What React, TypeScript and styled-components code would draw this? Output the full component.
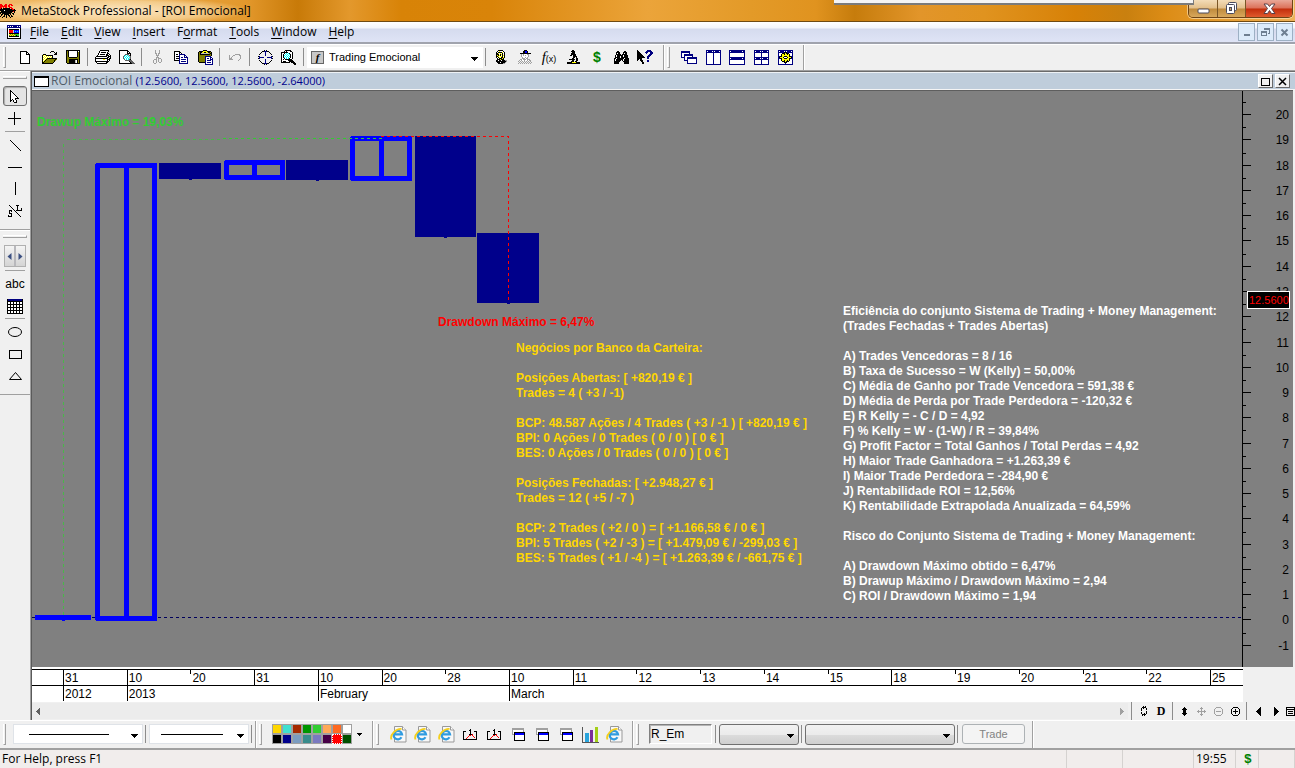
import React from "react";
import styled, { createGlobalStyle, css } from "styled-components";

const UI = `"Open Sans", "Noto Sans", sans-serif`;
const ARIAL = `"Liberation Sans", Arial, sans-serif`;

const Global = createGlobalStyle`
  *, *::before, *::after { box-sizing: border-box; }
  html, body, #root { height: 100%; }
  body { margin: 0; background: #f0f0f0; color: #000; font: 12px/16px ${UI}; overflow: hidden; }
  button, select, input { font: inherit; color: inherit; margin: 0; padding: 0; border-radius: 0; }
  button { background: none; border: 0; cursor: default; }
  svg { display: block; flex: none; }
`;

/* ---------- pixel sprites ---------- */

const PALETTE: Record<string, string> = {
  k: "#000", w: "#fff", y: "#ff0", Y: "#ffe600", o: "#808000", g: "#a0a0a0", d: "#606060",
  n: "#000080", b: "#00f", c: "#0ff", r: "#f00", m: "#c8c8c8", G: "#32cd32", s: "#c0c0c0",
};

const Sprite = ({ rows }: { rows: string[] }) => {
  const w = Math.max(...rows.map((r) => r.length));
  const rects: React.ReactNode[] = [];
  rows.forEach((row, y) => {
    let x = 0;
    while (x < row.length) {
      const ch = row[x];
      let n = 1;
      while (row[x + n] === ch) n++;
      if (PALETTE[ch]) rects.push(<rect key={`${x}-${y}`} x={x} y={y} width={n} height={1} fill={PALETTE[ch]} />);
      x += n;
    }
  });
  return (
    <svg width={w} height={rows.length} shapeRendering="crispEdges" aria-hidden="true">
      {rects}
    </svg>
  );
};

const S = {
  fresh: [
    "kkkkkkk...", "kwwwwwkk..", "kwwwwwkwk.", "kwwwwwkkkk", "kwwwwwwwwk", "kwwwwwwwwk", "kwwwwwwwwk",
    "kwwwwwwwwk", "kwwwwwwwwk", "kwwwwwwwwk", "kwwwwwwwwk", "kwwwwwwwwk", "kkkkkkkkkk",
  ],
  open: [
    ".........kkk...", "........k...k.k", ".............kk", ".kkk........kkk", "kywykkkkkkk....",
    "kwywywywywk....", "kywywywywyk....", "kwywykkkkkkkkkk", "kywykooooooooko", "kwykooooooooko.",
    "kykoooooooook..", "kkoooooooook...", "kkkkkkkkkkk....",
  ],
  save: [
    "kkkkkkkkkkkkkk", "kokwwwwwwwwkwk", "kokwwwwwwwwkok", "kokwwwwwwwwkok", "kokwwwwwwwwkok",
    "kokwwwwwwwwkok", "kokwwwwwwwwkok", "kookkkkkkkkook", "kooooooooooook", "kookkkkkkkkkok",
    "kookkkkkkswkok", "kookkkkkkswkok", "kookkkkkkswkok", ".kkkkkkkkkkkkk",
  ],
  print: [
    ".....kkkkkkkkk..", "....kwwwwwwwwk..", "....kwkkkkkwk...", "...kwwwwwwwwkk..", "...kwkkkkkwkkwk.",
    "..kwwwwwwwwkkkwk", ".kkkkkkkkkkkwkkk", "kwwwwwwwwwwwkkwk", "kkkkkkkkkkkkkwkk", "kwwwwwwwyywwkkk.",
    "kwwwwwwwwwwwkwk.", "kkkkkkkkkkkkkk..", ".kwwwwwwwwwkk...", "..kkkkkkkkkk....",
  ],
  preview: [
    "kkkkkkkkk.......", "kwwwwwwwkk......", "kwwwwwwwkwk.....", "kwwwwwwwkkkk....", "kwwwwwddddwk....",
    "kwwwwdcwcmdk....", "kwwwdcwcwcmd....", "kwwwdwcwcwcd....", "kwwwdcwcwcmd....", "kwwwwdwcwcdk....",
    "kwwwwwddddddd...", "kwwwwwwwwwkddd..", "kwwwwwwwwwwkddd.", "kkkkkkkkkkkkkddd",
  ],
  cut: [
    "..g...g..", "..g...g..", "..g...g..", "..gg.gg..", "...g.g...", "...ggg...", "....g....", "...ggg...",
    "...g.ggg.", ".ggg.g..g", "g..g.g..g", "g..g.g..g", "g..g..gg.", ".gg......",
  ],
  copy: [
    "kkkkkk.........", "kwwwwkk........", "kwwwwkwk.......", "kwkkwnnnnnn....", "kwwwwnwwwwnn...",
    "kwkkknwwwwnwn..", "kwwwwnwnnwnnnn.", "kwkkknwwwwwwwn.", "kwwwwnwnnnnnwn.", "kkkkknwwwwwwwn.",
    ".....nwnnnnnwn.", ".....nwwwwwwwn.", ".....nnnnnnnnn.",
  ],
  paste: [
    ".....kkkk......", ".kkkkyyyykkkk..", "kokkyykkyykkok.", "kokssssssssokk.", "kokkkkkkkkkkok.",
    "kooooooooooook.", "koooooonnnnnn..", "koooooonwwwwnn.", "koooooonwnnwnwn", "koooooonwwwwnnn",
    "koooooonwnnnnwn", "koooooonwwwwwwn", ".kkkkkknwnnnnwn", ".......nwwwwwwn", ".......nnnnnnnn",
  ],
  undo: [
    "......ggggg.", "g...gg....gg", "g..g.......g", "g.g........g", "ggg........g", "gggg......g.", ".........g..",
  ],
  target: [
    "......k.k......", "....kknnnkk....", "...k...n...k...", "..k....n....k..", ".k.....n.....k.",
    ".......n.......", "kn...........nk", ".nnnnn...nnnnn.", "kn...........nk", ".......n.......",
    ".k.....n.....k.", "..k....n....k..", "...k...n...k...", "....kknnnkk....", "......k.k......",
  ],
  zoom: [
    "....kkkkkk......", "...kwkwwwkk.....", "kkkkkkkwwwwk....", "kwwkwcwckwwk....", "kwkwcwcwckwk....",
    "kwkcwcwcwkwk....", "kwkwcwcwckwk....", "kwkcwcwcwkwk....", "kwwkwcwckwwk....", "kwkwkkkkkkk.....",
    "kwwwwwwkkkkk....", "kwkkkwwwkkkkk...", "kkkkkkkkk.kkkk..", "............kkk.", ".............kk.",
  ],
  lamp: [
    "...kkkkk....", "..kwywwwk...", ".kwkkkkywk..", ".kkywywkwk..", ".kkkwkykwk..", ".kykykwkyk..",
    ".kkywyykwk..", ".kwkywkkyk..", "..kwkkkyk...", "..kkkykkk...", ".kkwkkwkkkgg", ".kkkkkkkkkkg", "..kkkwkkkkg.", "...kkkkkgg..",
  ],
  man: [
    "......kkk......", ".....kkbbk.....", ".....kkbbk.....", "..kkkkkkkkkkk..", "...g.gwwwgg....", "...gwgwgwwg....",
    "...gwwwwwwg....", "....gwwgwg.....", "....gggwgg.....", "..ggwgggwggg...", ".gwgwwgwwgwgg..", "g.g.g.g.g.g.g..",
    ".g.g.g.g.g.g.g.", "g.g.g.g.g.g.g..",
  ],
  scope: [
    ".....kk......", "....kkkk.....", ".....kkk.....", "....kkkk.....", "....kkkkk....", "...kk.kkk....",
    "......kkkk...", "......kk.k...", ".....kk..kk..", "..kkkkkk.kk..", ".....kk..kk..", "....kkk.kk...", "kkkkkyyyykkkk",
    "kkkkkkkkkkkkk",
  ],
  binoc: [
    "...kk.....kk...", "..kkkk...kkkk..", "..kwkk...kwkk..", "..kkkkk.kkkkk..", ".kwkkkkkkwkkkk.", ".kwkkkwkkwkkkk.",
    ".kkkkkwkkkkkkk.", "kkwkkkkkkkwkkkk", "kwkkkkkkkwkkkkk", "kwkkkkk.kwkkkkk", "kkkkkk...kkkkkk", "kkkkk.....kkkkk",
    "kkkkk.....kkkkk",
  ],
  help: [
    "k.........nnnn..", "kk.......nnnnnn.", "kkk.....nnn..nnn", "kkkk.....n...nnn", "kkkkk.......nnn.", "kkkkkk.....nnn..",
    "kkkkkkk...nnn...", "kkkkkkkk..nn....", "kkkkk.....nn....", "kk.kk...........", "k..kkk....nn....", "....kk....nn....",
    ".....kk.........", ".....kk.........",
  ],
  cascade: [
    "nnnnnnnnn.......", "nnnnnnnnn.......", "nwwwwwwwn.......", "nwwnnnnnnnnn....", "nwwnnnnnnnnn....", "nwwnwwwwwwwn....",
    "nnnnwwnnnnnnnnnn", "...nwwnnnnnnnnnn", "...nwwnwwwwwwwwn", "...nnnnwwwwwwwwn", "......nwwwwwwwwn", "......nwwwwwwwwn",
    "......nnnnnnnnnn",
  ],
  tileV: [
    "nnnnnnnnnnnnnnn", "nwnnnnwnwnnnnwn", "nnnnnnnnnnnnnnn", ...Array(11).fill("nwwwwwwnwwwwwwn"), "nnnnnnnnnnnnnnn",
  ],
  tileH: [
    "nnnnnnnnnnnnnnnn", "nwnnnnnnnnnnnwnn", "nnnnnnnnnnnnnnnn", ...Array(4).fill("nwwwwwwwwwwwwwwn"),
    "nnnnnnnnnnnnnnnn", "nwnnnnnnnnnnnwnn", "nnnnnnnnnnnnnnnn", ...Array(4).fill("nwwwwwwwwwwwwwwn"), "nnnnnnnnnnnnnnnn",
  ],
  tileQ: [
    "nnnnnnnnnnnnnnn", "nwnnnnwnwnnnnwn", "nnnnnnnnnnnnnnn", ...Array(4).fill("nwwwwwwnwwwwwwn"),
    "nnnnnnnnnnnnnnn", "nwnnnnwnwnnnnwn", "nnnnnnnnnnnnnnn", ...Array(4).fill("nwwwwwwnwwwwwwn"), "nnnnnnnnnnnnnnn",
  ],
  tileGear: [
    "nnnnnnnnnnnnnnn", "nwnnnnwnwnnnnwn", "nnnnnnkkknnnnnn", "nwwwkkkykkkwwwn", "nwwkyykyykykwwn", "nwwkyyyyyyykwwn",
    "nnkkyykkkyykknn", "nkyyykwwwkyyykn", "nnkkyykkkyykknn", "nwwkyyyyyyykwwn", "nwwkyykyykykwwn", "nwwwkkkykkkwwwn",
    "nwwwwwkkkwwwwwn", "nwwwwwwnwwwwwwn", "nnnnnnnnnnnnnnn",
  ],
  doc: [
    "nnnnnnnnnnnnnn", "nwnwnwnnnnwnwn", "nnnnnnnnnnnnnn", "kwwwwwwwwwwwwk", "kwkkkkkkkkkkwk", "kwrrrrmbbbbbwk",
    "kwrrrrmbcbcbwk", "kwrrrrmbbbbbwk", "kwkkkkkkkkkkwk", "kwyoyoyoGGGGwk", "kwoyoyoyGkGGwk", "kwkkkkkkkkkkwk",
    "kwwwwwwwwwwwwk", "kkkkkkkkkkkkkk",
  ],
  bug: [
    "rr...rr..rrr....", "rrr.rrr.rr.rr...", "rrrrrrr.rr......", "rr.r.rr..rrr....", "rk.kkkkkkk.rr...", "kkkkkkkkkkkkrrk.",
    "kkkkwkkkkkkkkkkk", ".kkkkkkkkkkkkrk.", "kkkkkkkkkkkk..k.", "k.kkkkkkkkk.kk..", ".kk.kkkkk.k..k..", ".k..k.k.kk.k....",
    "k..kk.k..k.kk...", "..k...k...k.....",
  ],
  pointer: [
    "k.........", "kk........", "kwk.......", "kwwk......", "kwwwk.....", "kwwwwk....", "kwwwwwk...", "kwwwwwwk..",
    "kwwwwkkkk.", "kwkwwk....", "kk.kwwk...", "k..kwwk...", "....kkk...",
  ],
  chartIn: [
    ".......k......", "......kk......", "kkk....k...kkk", "k......k.....k", "k......k.....k", "k.....kkkr...k",
    "k.....rr.r...k", "k....r....r..k", "k...r......r.k", "k..r.........k", "kkkkkkkkkkkkkk",
  ],
  windows: [
    "gggggggggggg.", "gggggggggggg.", "gwwwwwwwwwwg.", "gwwwwwwwwwwg.", "gwkkkkkkkkkkk", "gwkbbbbbbbbbk", "ggkbbbbbbbbbk",
    "..kwwwwwwwwwk", "..kwwwwwwwwwk", "..kwwwwwwwwwk", "..kwwwwwwwwwk", "..kwwwwwwwwwk", "..kkkkkkkkkkk",
  ],
  table: [
    "knnnnnnnnnnnnnnk", "knnnnnnnnnnnnnnk", "kkkkkkkkkkkkkkkk", "kwwkwwkwwkwwkwwk", "kwwkwwkwwkwwkwwk", "kkkkkkkkkkkkkkkk",
    "kwwkwwkwwkwwkwwk", "kwwkwwkwwkwwkwwk", "kkkkkkkkkkkkkkkk", "kwwkwwkwwkwwkwwk", "kwwkwwkwwkwwkwwk", "kkkkkkkkkkkkkkkk",
    "kwwkwwkwwkwwkwwk", "kwwkwwkwwkwwkwwk", "kkkkkkkkkkkkkkkk",
  ],
  cycle: [
    "..k.k.", ".kkkk.", "k.k..k", "k....k", "k.....", ".....k", "k....k", "k..k.k", ".kkkk.", ".k.k..",
  ],
  vert: ["...k...", "..kkk..", ".kkkkk.", "..kkk..", "..kkk..", "..kkk..", ".kkkkk.", "..kkk..", "...k..."],
  move: ["....g....", "...ggg...", "....g....", ".g..g..g.", "ggggggggg", ".g..g..g.", "....g....", "...ggg...", "....g...."],
  minus: ["..ggggg..", ".g.....g.", "g.......g", "g.......g", "g.ggggg.g", "g.......g", "g.......g", ".g.....g.", "..ggggg.."],
  plus: ["..kkkkk..", ".k.....k.", "k...k...k", "k...k...k", "k.kkkkk.k", "k...k...k", "k...k...k", ".k.....k.", "..kkkkk.."],
  left: ["....k", "...kk", "..kkk", ".kkkk", "kkkkk", ".kkkk", "..kkk", "...kk", "....k"],
  right: ["k....", "kk...", "kkk..", "kkkk.", "kkkkk", "kkkk.", "kkk..", "kk...", "k...."],
  list: ["kkkkkkkkk", "k.......k", "kkkkkkkkk", "k.......k", "k.kkkkk.k", "k.......k", "k.kkkkk.k", "k.......k", "kkkkkkkkk"],
  down: ["kkkkkkk", ".kkkkk.", "..kkk..", "...k..."],
  downSm: ["kkkkk", ".kkk.", "..k.."],
  leftSm: ["...d", "..dd", ".ddd", "dddd", ".ddd", "..dd", "...d"],
  rightSm: ["g...", "gg..", "ggg.", "gggg", "ggg.", "gg..", "g..."],
};

const IeIcon = () => (
  <svg width="17" height="17" viewBox="0 0 17 17" aria-hidden="true">
    <path d="M4.500 .5h8l3.500 3.500v12h-11.500z" fill="#f8f8f8" stroke="#999" />
    <path d="M12.500 .5v3.500h3.500" fill="#fff" stroke="#999" />
    <path d="M11.500 11.300a4.200 4.200 0 1 1 .5-3H4.500" fill="none" stroke="#2f9be0" strokeWidth="2.200" />
    <path d="M1.500 13.500C-.5 9 6 2.500 11.500 3" fill="none" stroke="#f4cf1d" strokeWidth="1.800" />
  </svg>
);

const BarsIcon = () => (
  <svg width="17" height="17" viewBox="0 0 17 17" shapeRendering="crispEdges" aria-hidden="true">
    <path d="M.5 1v15.500H17" fill="none" stroke="#555" />
    <path d="M3 7h4v9H3z" fill="#2aa5dc" />
    <path d="M8 4h3v12H8z" fill="#7b2d9b" />
    <path d="M13 1h3v15h-3z" fill="#a4cf18" />
  </svg>
);

/* ---------- window frame ---------- */

const Window = styled.div`
  display: flex;
  flex-direction: column;
  min-height: 100vh;
  background: #f0f0f0;
`;

const TitleBar = styled.header`
  position: relative;
  display: flex;
  align-items: center;
  gap: 5px;
  height: 22px;
  border-bottom: 1px solid #6f4a12;
  background:
    radial-gradient(ellipse 160px 18px at 120px 11px, rgba(255, 243, 220, .85), rgba(255, 240, 205, .5) 55%, transparent 80%),
    linear-gradient(90deg, #f0ba68 0, #e3982c 19%, #c87a08 23%, #e3982c 27%, #d88307 31%, #d98409 38%, #eba43a 50%, #e39a28 58%, #e0931f 63%, #c67c0c 66%, #e2952a 71%, #e0931f 76%, #d78107 83%, #c9800f 87%, #dc8c16 90%, #e9a33a 96%, #eeb35a 100%);
`;

const Title = styled.h1`
  flex: 1;
  margin: 0;
  font: 12px/20px ${UI};
`;

const TopSheet = styled.div`
  position: absolute;
  top: 0;
  right: 101px;
  width: 360px;
  height: 5px;
  background: #f4f4f4;
  border-bottom: 2px solid #7b7b7b;
  border-right: 1px solid #7b7b7b;
`;

const CaptionButtons = styled.div`
  display: flex;
  align-self: flex-start;
  height: 18px;
  margin-right: 2px;
  border: 1px solid #6d4416;
  border-top: 0;
  border-radius: 0 0 5px 5px;
  overflow: hidden;
  box-shadow: 0 0 0 1px rgba(255, 235, 200, .6);
`;

const CaptionButton = styled.button<{ $close?: boolean }>`
  display: grid;
  place-items: center;
  width: ${(p) => (p.$close ? 47 : 28)}px;
  background: ${(p) =>
    p.$close
      ? "linear-gradient(#e9a898 0, #dc7058 48%, #c22d0c 52%, #e05a2c 100%)"
      : "linear-gradient(#f3dcb8 0, #e2bf8a 48%, #bf8a3c 52%, #d8a85c 100%)"};
  & + & { border-left: 1px solid #7a5626; }
`;

const MenuBar = styled.nav`
  display: flex;
  align-items: center;
  height: 22px;
  padding: 0 2px 0 7px;
  background: linear-gradient(#fff 0, #f3f5fb 6px, #d5dbee 7px, #dfe4f6 100%);
  border-bottom: 2px solid #a0a3ad;
`;

const MenuItem = styled.button`
  padding: 0 6px;
  font: 12px/18px ${UI};
  u { text-underline-offset: 2px; }
`;

const MenuGap = styled.div`
  width: 3px;
`;

const Spacer = styled.div`
  flex: 1;
`;

const ChildButtons = styled.div`
  display: flex;
  gap: 2px;
`;

const ChildButton = styled.button`
  display: grid;
  place-items: center;
  width: 17px;
  height: 18px;
  background: #dcebfa;
  border: 1px solid #9db0c4;
`;

/* ---------- tool bars ---------- */

const Toolbar = styled.div<{ $bottom?: boolean }>`
  display: flex;
  align-items: center;
  height: ${(p) => (p.$bottom ? 29 : 27)}px;
  border-top: 1px solid #fff;
  border-bottom: 1px solid #a0a0a0;
`;

const ToolGroup = styled.div<{ $roomy?: boolean }>`
  display: flex;
  align-items: center;
  align-self: stretch;
  padding: 0 ${(p) => (p.$roomy ? 6 : 0)}px 1px 0;
  border-right: 1px solid #a0a0a0;
  box-shadow: 1px 0 0 #fff;
`;

const Grip = styled.i<{ $flat?: boolean }>`
  flex: none;
  ${(p) =>
    p.$flat
      ? css`width: 24px; height: 3px; margin: 4px 0 7px; border-bottom: 1px solid #a0a0a0; border-right: 1px solid #a0a0a0; border-top: 1px solid #fff;`
      : css`width: 3px; height: 21px; margin: 0 7px 0 3px; border-right: 1px solid #a0a0a0; border-bottom: 1px solid #a0a0a0; border-left: 1px solid #fff;`}
`;

const Sep = styled.i<{ $flat?: boolean }>`
  flex: none;
  ${(p) =>
    p.$flat
      ? css`width: 20px; height: 1px; margin: 1px 0 2px; background: #a0a0a0;`
      : css`width: 1px; height: 18px; margin: 0 3px 0 2px; background: #8c8c8c;`}
`;

const Tool = styled.button<{ $pressed?: boolean; $w?: number }>`
  display: grid;
  place-items: center;
  flex: none;
  width: ${(p) => p.$w ?? 24}px;
  height: 22px;
  ${(p) =>
    p.$pressed &&
    css`
      height: 20px;
      margin: 0 0 2px;
      background: #e4e4e4;
      border: 1px solid #707070;
      border-radius: 3px;
      box-shadow: inset 1px 1px 1px #aaa;
    `}
`;

const Glyph = styled.span<{ $size?: number; $color?: string; $serif?: boolean; $bold?: boolean }>`
  font: ${(p) => (p.$bold ? "bold " : "")}${(p) => p.$size ?? 12}px/16px ${(p) => (p.$serif ? `"Liberation Serif", serif` : ARIAL)};
  color: ${(p) => p.$color ?? "#000"};
`;

const Fx = styled.span`
  font: italic 15px/16px "Liberation Serif", serif;
  small { font: 9px/9px ${ARIAL}; }
`;

const Combo = styled.label<{ $w: number; $h: number; $look: "white" | "field" | "button" }>`
  position: relative;
  flex: none;
  width: ${(p) => p.$w}px;
  height: ${(p) => p.$h}px;
  select {
    appearance: none;
    width: 100%;
    height: 100%;
    padding: 0 18px 0 ${(p) => (p.$look === "white" ? 21 : 6)}px;
    font: 11px/16px ${ARIAL};
    outline: 0;
    ${(p) =>
      p.$look === "button"
        ? css`border: 1px solid #707070; border-radius: 3px; background: linear-gradient(#f2f2f2 0, #ebebeb 50%, #dcdcdc 51%, #cfcfcf 100%);`
        : css`border: 1px solid ${p.$look === "field" ? "#dfe3e8" : "#fff"}; background: #fff;`}
  }
`;

const ComboArrow = styled.span`
  position: absolute;
  right: 5px;
  top: 50%;
  pointer-events: none;
`;

const ComboLead = styled.span`
  position: absolute;
  left: 4px;
  top: 4px;
  width: 13px;
  height: 13px;
  background: #c8c8c8;
  border: 1px solid #666;
  font: italic bold 11px/10px "Liberation Serif", serif;
  text-align: center;
  pointer-events: none;
`;

const LineSample = styled.span`
  position: absolute;
  left: 12%;
  right: 26%;
  top: 50%;
  height: 1px;
  background: #000;
  pointer-events: none;
`;

const Swatches = styled.div`
  display: grid;
  grid-template-columns: repeat(8, 10px);
  grid-auto-rows: 10px;
  margin-left: 3px;
`;

const Swatch = styled.button<{ $c: string; $on?: boolean }>`
  background: ${(p) => p.$c};
  border: 1px ${(p) => (p.$on ? "dotted #fff" : "solid #a0a0a0")};
`;

const SymbolBox = styled.input`
  width: 63px;
  height: 20px;
  margin: 0 1px 0 3px;
  padding: 0 1px;
  background: #f0f0f0;
  border: 1px solid;
  border-color: #808080 #fff #fff #808080;
  box-shadow: inset 1px 1px 0 #b4b4b4;
  font: 12px/16px ${ARIAL};
`;

const TradeButton = styled.button`
  width: 63px;
  height: 20px;
  margin: 0 7px 0 1px;
  background: #f4f4f4;
  border: 1px solid #adb2b5;
  border-radius: 3px;
  font: 11px/16px ${ARIAL};
  &:disabled { color: #838383; }
`;

/* ---------- work area ---------- */

const Body = styled.div`
  display: flex;
  flex: 1;
`;

const SideBar = styled.aside`
  display: flex;
  flex-direction: column;
  flex: none;
  width: 31px;
  border-right: 1px solid #a0a0a0;
`;

const SideGroup = styled.div`
  display: flex;
  flex-direction: column;
  align-items: center;
  padding-bottom: 7px;
  border-bottom: 1px solid #a0a0a0;
  border-top: 1px solid #fff;
`;

const Spinner = styled.div`
  display: flex;
  width: 22px;
  height: 22px;
  margin-bottom: 2px;
  border: 1px solid #b0b0b0;
  button { flex: 1; display: grid; place-items: center; background: linear-gradient(#f4f4f4, #d4d4d4); }
  button + button { border-left: 2px solid #b8b8bc; }
`;

const ChartWindow = styled.main`
  display: flex;
  flex-direction: column;
  flex: 1;
  min-width: 0;
  border-left: 1px solid #5a5a5a;
  border-top: 1px solid #6b6b6b;
`;

const ChartTitle = styled.div`
  display: flex;
  align-items: center;
  gap: 2px;
  height: 18px;
  padding: 0 5px 0 2px;
  background: #bfcddb;
  border-top: 1px solid #eef2f5;
  border-bottom: 1px solid #f4f4f4;
  color: #505b66;
  b { font-weight: 400; font-size: 11px; color: #00008b; }
`;

const MiniWindow = styled.i`
  width: 15px;
  height: 11px;
  background: #fff;
  border: 1px solid #000;
  border-top-width: 2px;
`;

const MiniButton = styled.button`
  display: grid;
  place-items: center;
  width: 15px;
  height: 14px;
  background: #f0f0f0;
  border: 1px solid;
  border-color: #fff #696969 #696969 #fff;
`;

const PlotRow = styled.div`
  display: flex;
  flex: 1;
  margin-right: 2px;
  border-top: 1px solid #5e5e5e;
  background: #808080;
`;

const Plot = styled.div`
  position: relative;
  flex: 1;
  overflow: hidden;
`;

const Note = styled.p<{ $x: number; $y: number; $color: string }>`
  position: absolute;
  left: ${(p) => p.$x}px;
  top: ${(p) => p.$y}px;
  margin: 0;
  color: ${(p) => p.$color};
  font: bold 12px/15px ${ARIAL};
  white-space: pre;
`;

const PriceAxis = styled.div`
  position: relative;
  display: flex;
  flex-direction: column;
  width: 51px;
  padding: 11px 0 9px;
  border-left: 1px solid #000;
`;

const Price = styled.div`
  display: flex;
  flex: 1;
  align-items: center;
  justify-content: flex-end;
  padding: 1px 4px 0 0;
  background:
    linear-gradient(#000, #000) 0 0 / 3px 1px no-repeat,
    linear-gradient(#000, #000) 0 50% / 8px 1px no-repeat;
  font: 12px/14px ${ARIAL};
`;

const LastPrice = styled.span`
  position: absolute;
  left: 4px;
  top: 200px;
  width: 43px;
  padding: 0 1px;
  background: #000;
  border: 1px solid #fff;
  color: #f00;
  font: 11px/16px ${ARIAL};
`;

const DateAxis = styled.div`
  margin-right: 52px;
  padding: 2px 0 1px;
  background: #fff;
  font: 12px/16px ${ARIAL};
`;

const DateRow = styled.div`
  display: flex;
  height: 16px;
  border-top: 1px solid #000;
`;

const DateCell = styled.span<{ $span?: number; $w?: number; $tick?: "full" | "short" }>`
  flex: ${(p) => (p.$w ? `0 0 ${p.$w}px` : `${p.$span ?? 1} 1 0`)};
  min-width: 0;
  text-indent: 2px;
  white-space: nowrap;
  background: ${(p) =>
    p.$tick ? `linear-gradient(#000, #000) 0 0 / 1px ${p.$tick === "full" ? "100%" : "4px"} no-repeat` : "none"};
`;

const ScrollRow = styled.div`
  display: flex;
  align-items: center;
  height: 18px;
  overflow: hidden;
`;

const ScrollTrack = styled.div`
  display: flex;
  align-items: center;
  justify-content: space-between;
  flex: 1;
  height: 16px;
  margin-right: 1px;
  padding: 0 4px;
  background: #ececec;
`;

const StatusBar = styled.footer`
  display: flex;
  height: 19px;
  border-top: 1px solid #a0a0a0;
  background: #f1edec;
  line-height: 18px;
`;

const StatusCell = styled.span<{ $w?: number }>`
  flex: ${(p) => (p.$w ? `0 0 ${p.$w}px` : "1")};
  padding-left: 2px;
  border-right: 1px solid #d5d2d0;
  white-space: nowrap;
`;

/* ---------- data ---------- */

const MENUS = ["_File", "_Edit", "_View", "_Insert", "F_ormat", "_Tools", "_Window", "_Help"];

const DATES: [string, "full" | "short"][] = [
  ["31", "full"], ["10", "full"], ["20", "short"], ["31", "full"], ["10", "full"], ["20", "full"], ["28", "short"],
  ["10", "full"], ["11", "full"], ["12", "short"], ["13", "short"], ["14", "short"], ["15", "short"], ["18", "full"],
  ["19", "short"], ["20", "short"], ["21", "short"], ["22", "short"],
];

const PRICES = Array.from({ length: 22 }, (_, i) => 20 - i);

const COLORS = [
  "#ffd700", "#40e0d0", "#a52a00", "#009600", "#32cd32", "#ffa958", "#ff6a22", "#ffffff",
  "#000000", "#00008b", "#7b9cc0", "#388c8c", "#7a7ac0", "#460046", "#ff0000", "#005000",
];

const BANKS = `Negócios por Banco da Carteira:

Posições Abertas: [ +820,19 € ]
Trades = 4 ( +3 / -1)

BCP: 48.587 Ações / 4 Trades ( +3 / -1 ) [ +820,19 € ]
BPI: 0 Ações / 0 Trades ( 0 / 0 ) [ 0 € ]
BES: 0 Ações / 0 Trades ( 0 / 0 ) [ 0 € ]

Posições Fechadas: [ +2.948,27 € ]
Trades = 12 ( +5 / -7 )

BCP: 2 Trades ( +2 / 0 ) = [ +1.166,58 € / 0 € ]
BPI: 5 Trades ( +2 / -3 ) = [ +1.479,09 € / -299,03 € ]
BES: 5 Trades ( +1 / -4 ) = [ +1.263,39 € / -661,75 € ]`;

const SYSTEM = `Eficiência do conjunto Sistema de Trading + Money Management:
(Trades Fechadas + Trades Abertas)

A) Trades Vencedoras = 8 / 16
B) Taxa de Sucesso = W (Kelly) = 50,00%
C) Média de Ganho por Trade Vencedora = 591,38 €
D) Média de Perda por Trade Perdedora = -120,32 €
E) R Kelly = - C / D = 4,92
F) % Kelly = W - (1-W) / R = 39,84%
G) Profit Factor = Total Ganhos / Total Perdas = 4,92
H) Maior Trade Ganhadora = +1.263,39 €
I) Maior Trade Perdedora = -284,90 €
J) Rentabilidade ROI = 12,56%
K) Rentabilidade Extrapolada Anualizada = 64,59%

Risco do Conjunto Sistema de Trading + Money Management:

A) Drawdown Máximo obtido = 6,47%
B) Drawup Máximo / Drawdown Máximo = 2,94
C) ROI / Drawdown Máximo = 1,94`;

/* Solid candles are losing periods, hollow ones winning: [x, y, width, height] */
const SOLID = [[127, 72, 62, 16], [254, 69, 62, 20], [383, 45, 61, 101], [445, 142, 62, 70]];
const HOLLOW = [[63, 72, 62, 458], [192, 69, 61, 20], [318, 45, 62, 45]];

const Candles = () => (
  <svg width="100%" height="575" shapeRendering="crispEdges" role="img" aria-label="ROI Emocional">
    <line x1="0" x2="100%" y1="526.500" y2="526.500" stroke="#00005c" strokeDasharray="3 3" />
    <path d="M31.500 53V525M35 48.500H189" fill="none" stroke="#32cd32" strokeDasharray="3 3" strokeOpacity=".7" />
    <path d="M3 524h56v5H33v1h-3v-1H3z" fill="#00f" />
    {SOLID.map(([x, y, w, h]) => (
      <path key={x} d={`M${x} ${y}h${w}v${h}h-${w}zM${x + Math.floor(w / 2) - 1} ${y + h}h3v1h-3z`} fill="#00008b" />
    ))}
    {HOLLOW.map(([x, y, w, h]) => (
      <g key={x} fill="#00f">
        <path
          fillRule="evenodd"
          d={`M${x + 1} ${y}h${w - 2}l1 1v${h - 2}l-1 1h-${w - 2}l-1 -1v-${h - 2}zM${x + 5} ${y + 5}v${h - 10}h${w - 10}v-${h - 10}z`}
        />
        <rect x={x + Math.floor(w / 2) - 2} y={y} width="5" height={h} />
      </g>
    ))}
    <path d="M191 47.500H350" stroke="#32cd32" strokeDasharray="3 3" />
    <path d="M349 45.500H476.500V212" fill="none" stroke="#f00" strokeDasharray="3 3" />
  </svg>
);

const DropDown = ({ w, h, look, label, value, line, lead }: {
  w: number; h: number; look: "white" | "field" | "button"; label: string; value?: string; line?: boolean; lead?: boolean;
}) => (
  <Combo $w={w} $h={h} $look={look}>
    <select aria-label={label}><option>{value ?? ""}</option></select>
    {lead && <ComboLead aria-hidden="true">f</ComboLead>}
    {line && <LineSample />}
    <ComboArrow><Sprite rows={S.down} /></ComboArrow>
  </Combo>
);

const T = ({ label, s, w }: { label: string; s: keyof typeof S; w?: number }) => (
  <Tool aria-label={label} $w={w}><Sprite rows={S[s]} /></Tool>
);

const Stroke = ({ label, children }: { label: string; children: React.ReactNode }) => (
  <Tool aria-label={label}>
    <svg width="16" height="16" fill="none" stroke="#000" shapeRendering="crispEdges" aria-hidden="true">{children}</svg>
  </Tool>
);

export default function App() {
  return (
    <Window>
      <Global />
      <TitleBar>
        <Sprite rows={S.bug} />
        <Title>MetaStock Professional - [ROI Emocional]</Title>
        <TopSheet />
        <CaptionButtons>
          <CaptionButton aria-label="Minimize">
            <svg width="13" height="12"><rect x="1" y="6" width="11" height="4" rx="1" fill="#fff" stroke="#4a4a5c" /></svg>
          </CaptionButton>
          <CaptionButton aria-label="Restore">
            <svg width="13" height="13" fill="#fff" stroke="#4a4a5c">
              <rect x="3.500" y=".5" width="8" height="8" rx="1" /><rect x="1.500" y="2.500" width="8" height="9" rx="1" />
              <rect x="4.500" y="5.500" width="2" height="3" fill="#c9a065" />
            </svg>
          </CaptionButton>
          <CaptionButton $close aria-label="Close">
            <svg width="13" height="12">
              <path d="M1 1h3.500l2 2.500 2-2.500H12L8.500 5.500 12 10.500H8.500l-2-3-2 3H1l3.500-5z" fill="#fff" stroke="#5a4048" />
            </svg>
          </CaptionButton>
        </CaptionButtons>
      </TitleBar>

      <MenuBar>
        <Sprite rows={S.doc} />
        <MenuGap />
        {MENUS.map((m) => {
          const i = m.indexOf("_");
          return <MenuItem key={m}>{m.slice(0, i)}<u>{m[i + 1]}</u>{m.slice(i + 2)}</MenuItem>;
        })}
        <Spacer />
        <ChildButtons>
          <ChildButton aria-label="Minimize chart"><svg width="9" height="9"><path d="M2 6h6v2H2z" fill="#6e7f91" /></svg></ChildButton>
          <ChildButton aria-label="Restore chart">
            <svg width="9" height="9" fill="none" stroke="#6e7f91" shapeRendering="crispEdges">
              <path d="M3 2V.5h5.500V5H7" strokeWidth="1" /><path d="M3 1.500h5" /><path d="M.5 3.500h5v4h-5zM1 4.500h4" />
            </svg>
          </ChildButton>
          <ChildButton aria-label="Close chart"><svg width="9" height="9"><path d="M1.500 1.500l6 6M7.500 1.500l-6 6" stroke="#6e7f91" strokeWidth="2" /></svg></ChildButton>
        </ChildButtons>
      </MenuBar>

      <Toolbar>
        <ToolGroup $roomy>
          <Grip />
          <T label="New" s="fresh" /><T label="Open" s="open" /><T label="Save" s="save" /><Sep />
          <T label="Print" s="print" /><T label="Print preview" s="preview" /><Sep />
          <T label="Cut" s="cut" /><T label="Copy" s="copy" /><T label="Paste" s="paste" /><Sep />
          <T label="Undo" s="undo" /><Sep />
          <T label="Choose indicator" s="target" /><T label="Zoom box" s="zoom" /><Sep />
          <DropDown w={176} h={21} look="white" label="Indicator" value="Trading Emocional" lead /><Sep />
          <T label="Explorer" s="lamp" /><T label="Expert advisor" s="man" />
          <Tool aria-label="Indicator builder"><Fx>f<small>(x)</small></Fx></Tool>
          <T label="System tester" s="scope" />
          <Tool aria-label="Option scope"><Glyph $bold $size={14} $color="#008000">$</Glyph></Tool>
          <T label="Find" s="binoc" /><T label="Help pointer" s="help" />
        </ToolGroup>
        <ToolGroup $roomy>
          <Grip />
          <T label="Cascade" s="cascade" /><T label="Tile columns" s="tileV" /><T label="Tile rows" s="tileH" />
          <T label="Tile" s="tileQ" /><T label="Tile options" s="tileGear" />
        </ToolGroup>
      </Toolbar>

      <Body>
        <SideBar>
          <SideGroup>
            <Grip $flat />
            <Tool $pressed aria-label="Select"><Sprite rows={S.pointer} /></Tool>
            <Stroke label="Crosshair"><path d="M1 7.500H14M7.500 1V14" /></Stroke>
            <Sep $flat />
            <Stroke label="Trend line"><path d="M3 3L14 14" shapeRendering="auto" /></Stroke>
            <Stroke label="Horizontal line"><path d="M1 8.500H15" /></Stroke>
            <Stroke label="Vertical line"><path d="M8.500 1V14" /></Stroke>
            <Stroke label="Speed resistance lines">
              <path d="M2 2L14 14" shapeRendering="auto" />
              <path d="M10.500 2V7.500M9 2.500h3M9 7.500h5V5M5 7.500H2.500V10H4.500V13.500H1.500M4.500 7v2M1.500 12v2" />
            </Stroke>
          </SideGroup>
          <SideGroup>
            <Grip $flat />
            <Spinner>
              <button aria-label="Previous"><svg width="5" height="7"><path d="M4.500 0v7L.5 3.500z" fill="#3b4f81" /></svg></button>
              <button aria-label="Next"><svg width="5" height="7"><path d="M.5 0v7l4-3.500z" fill="#3b4f81" /></svg></button>
            </Spinner>
            <Sep $flat />
            <Tool aria-label="Text"><Glyph>abc</Glyph></Tool>
            <T label="Table" s="table" />
            <Sep $flat />
            <Stroke label="Ellipse"><ellipse cx="8" cy="8" rx="6.500" ry="4.500" shapeRendering="auto" /></Stroke>
            <Stroke label="Rectangle"><rect x="2.500" y="4.500" width="12" height="8" /></Stroke>
            <Stroke label="Triangle"><path d="M8.500 4.500L14.500 11.500H2.500z" shapeRendering="auto" /></Stroke>
          </SideGroup>
        </SideBar>

        <ChartWindow>
          <ChartTitle>
            <MiniWindow />
            <span>ROI Emocional <b>(12.5600, 12.5600, 12.5600, -2.64000)</b></span>
            <Spacer />
            <MiniButton aria-label="Maximize panel"><svg width="9" height="9"><path d="M.5 1h8v7.500h-8z M0 1.500h9" fill="none" stroke="#000" shapeRendering="crispEdges" /></svg></MiniButton>
            <MiniButton aria-label="Close panel"><svg width="9" height="9"><path d="M1 1l7 7M8 1l-7 7" stroke="#000" strokeWidth="1.500" /></svg></MiniButton>
          </ChartTitle>
          <PlotRow>
            <Plot>
              <Candles />
              <Note $x={5} $y={24} $color="#32cd32">Drawup Máximo = 19,03%</Note>
              <Note $x={406} $y={224} $color="#f00">Drawdown Máximo = 6,47%</Note>
              <Note $x={484} $y={250} $color="#ffd700">{BANKS}</Note>
              <Note $x={811} $y={213} $color="#fff">{SYSTEM}</Note>
            </Plot>
            <PriceAxis>
              {PRICES.map((p) => <Price key={p}>{p}</Price>)}
              <LastPrice>12.5600</LastPrice>
            </PriceAxis>
          </PlotRow>
          <DateAxis>
            <DateRow>
              <DateCell $w={31} />
              {DATES.map(([d, tick], i) => <DateCell key={i} $tick={tick}>{d}</DateCell>)}
              <DateCell $w={33} $tick="full">25</DateCell>
            </DateRow>
            <DateRow>
              <DateCell $w={31} />
              <DateCell $tick="full">2012</DateCell>
              <DateCell $span={3} $tick="full">2013</DateCell>
              <DateCell $span={3} $tick="full">February</DateCell>
              <DateCell $span={11} $tick="full">March</DateCell>
              <DateCell $w={33} />
            </DateRow>
          </DateAxis>
          <ScrollRow>
            <ScrollTrack><Sprite rows={S.leftSm} /><Sprite rows={S.rightSm} /></ScrollTrack>
            <Sep />
            <T label="Refresh" s="cycle" w={17} />
            <Tool aria-label="Daily" $w={18}><Glyph $bold $serif>D</Glyph></Tool>
            <Sep />
            <T label="Rescale" s="vert" w={17} /><T label="Move" s="move" w={17} />
            <T label="Zoom out" s="minus" w={17} /><T label="Zoom in" s="plus" w={17} />
            <Sep />
            <T label="Back" s="left" w={17} /><T label="Forward" s="right" w={18} />
            <Tool aria-label="Layout list" $w={10}><Sprite rows={S.list} /></Tool>
          </ScrollRow>
        </ChartWindow>
      </Body>

      <Toolbar $bottom>
        <ToolGroup>
          <Grip />
          <DropDown w={130} h={20} look="field" label="Line style" line />
          <Sep />
          <DropDown w={100} h={20} look="field" label="Line weight" line />
          <Sep />
        </ToolGroup>
        <ToolGroup $roomy>
          <Grip />
          <Swatches>
            {COLORS.map((c, i) => <Swatch key={c} $c={c} $on={i === 14} aria-label={`Color ${i + 1}`} />)}
          </Swatches>
          <T label="More colors" s="downSm" w={14} />
        </ToolGroup>
        <ToolGroup $roomy>
          <Grip />
          {[1, 2, 3].map((n) => <Tool key={n} aria-label={`Web page ${n}`}><IeIcon /></Tool>)}
          <T label="Download data" s="chartIn" /><T label="Convert data" s="chartIn" />
          <T label="Layout one" s="windows" /><T label="Layout two" s="windows" /><T label="Layout three" s="windows" />
          <Tool aria-label="Statistics"><BarsIcon /></Tool>
          <Tool aria-label="Web page 4"><IeIcon /></Tool>
        </ToolGroup>
        <ToolGroup>
          <Grip />
          <SymbolBox aria-label="Symbol" defaultValue="R_Em" />
          <Sep />
          <DropDown w={80} h={21} look="button" label="Account" />
          <Sep />
          <DropDown w={150} h={21} look="button" label="Order" />
          <Sep />
          <TradeButton disabled>Trade</TradeButton>
        </ToolGroup>
      </Toolbar>

      <StatusBar>
        <StatusCell>For Help, press F1</StatusCell>
        <StatusCell $w={56} /><StatusCell $w={71} />
        <StatusCell $w={42}>19:55</StatusCell>
        <StatusCell $w={23}>&nbsp;&nbsp;<Glyph $bold $size={13} $color="#008000">$</Glyph></StatusCell>
        <StatusCell $w={36} />
      </StatusBar>
    </Window>
  );
}
